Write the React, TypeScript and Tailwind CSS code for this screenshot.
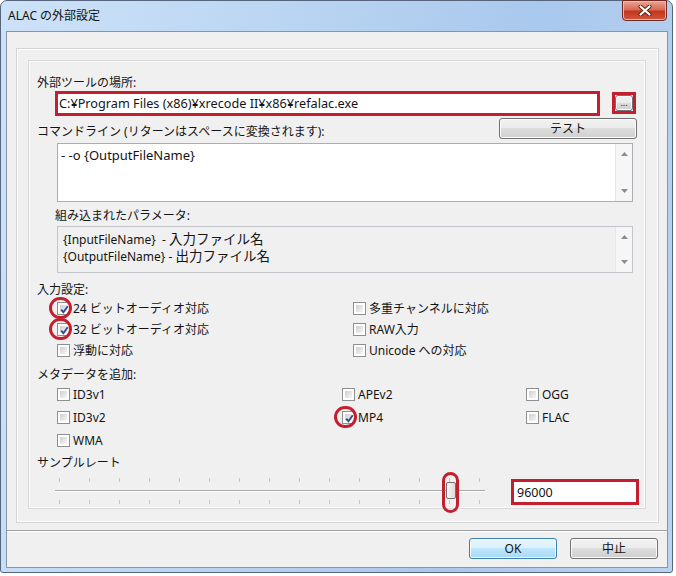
import React from "react"
import clsx from "clsx"

function Check({ checked }: { checked?: boolean }) {
  return (
    <span className="relative flex h-[13px] w-[13px] shrink-0 border border-[#8e8f8f] bg-white p-[2px]">
      <span className="block h-full w-full bg-gradient-to-br from-[#cfcfcf] to-[#f7f7f7]" />
      {checked && (
        <svg className="absolute left-[1px] top-[1px]" width="11" height="11" viewBox="0 0 11 11">
          <path d="M2.2 5.6 L4.4 8.2 L8.8 2.2" fill="none" stroke="#34498a" strokeWidth="1.9" />
        </svg>
      )}
    </span>
  )
}

function Opt({ label, checked, ring }: { label: string; checked?: boolean; ring?: boolean }) {
  return (
    <div className="flex items-center gap-[3px]">
      <span className="relative">
        <Check checked={checked} />
        {ring && (
          <span className="absolute left-[-8px] top-[-5px] h-[22px] w-[23px] rounded-full border-[3px] border-[#c41f2f]" />
        )}
      </span>
      <span>{label}</span>
    </div>
  )
}

function Btn({ children, className, primary }: { children: React.ReactNode; className?: string; primary?: boolean }) {
  return (
    <div
      className={clsx(
        "flex items-center justify-center rounded-[3px] border shadow-[inset_0_0_0_1px_#fbfbfb]",
        primary
          ? "border-[#3c7fb1] bg-[linear-gradient(#eaf6fd,#d9f0fc_50%,#bee6fd_50%,#a7d9f5)]"
          : "border-[#707070] bg-[linear-gradient(#f2f2f2,#ebebeb_50%,#dddddd_50%,#cfcfcf)]",
        className
      )}
    >
      {children}
    </div>
  )
}

function VScroll() {
  return (
    <div className="flex w-[17px] shrink-0 flex-col items-center justify-between border-l border-[#e6e6e6] bg-[#f6f6f6] py-[8px]">
      <svg width="7" height="4" viewBox="0 0 7 4">
        <path d="M0 4 L3.5 0 L7 4Z" fill="#8c8c8c" />
      </svg>
      <svg width="7" height="4" viewBox="0 0 7 4">
        <path d="M0 0 L3.5 4 L7 0Z" fill="#8c8c8c" />
      </svg>
    </div>
  )
}

const ticks = Array.from({ length: 15 }, (_, i) => 4 + i * 30)

export default function App() {
  return (
    <div className="h-[576px] w-[676px] overflow-hidden bg-white font-['Noto_Sans','Noto_Sans_CJK_JP',sans-serif] text-[12px] leading-[17px] text-[#141414]">
      <div className="flex h-[573px] w-[673px] flex-col rounded-t-[7px] rounded-b-[3px] border border-[#56657b] bg-[linear-gradient(100deg,#cde2f8,#b9d4f2_40%,#a9c8ed_70%,#b9d3f0)]">
        {/* title bar */}
        <div className="flex h-[30px] items-start justify-between">
          <span className="mt-[6px] pl-[7px] text-[#111]">ALAC の外部設定</span>
          <div className="mr-[5px] mt-[-1px] flex h-[21px] w-[45px] items-center justify-center rounded-b-[4px] border border-[#6e2a22] bg-[linear-gradient(#e9a797,#d66a55_45%,#c2371f_55%,#d2563b)] shadow-[inset_0_0_0_1px_#efb7a8]">
            <svg width="14" height="11" viewBox="0 0 14 11">
              <path d="M2.5 1.5 L11.5 9.5 M11.5 1.5 L2.5 9.5" stroke="#5a1d16" strokeWidth="4" strokeLinecap="round" />
              <path d="M2.5 1.5 L11.5 9.5 M11.5 1.5 L2.5 9.5" stroke="#ffffff" strokeWidth="2.2" strokeLinecap="round" />
            </svg>
          </div>
        </div>

        {/* client area */}
        <div className="ml-[5px] flex h-[537px] w-[662px] flex-col border border-[#8596ab] bg-[#f0f0f0]">
          <div className="ml-[9px] mt-[16px] h-[475px] w-[643px] border border-[#d5d5d5] shadow-[inset_0_0_0_1px_#ffffff]">
            <div className="ml-[11px] mt-[11px] flex h-[449px] w-[618px] flex-col border border-[#d9d9d9] shadow-[inset_0_0_0_1px_#fbfbfb]">
              <div className="mt-[13px] h-[17px] pl-[8px]">外部ツールの場所:</div>

              <div className="flex h-[25px] items-start">
                <div className="ml-[26px] flex h-[25px] w-[545px] items-center border-[3px] border-[#c41f2f] bg-white pl-[1px] text-[12.7px]">
                  C:¥Program Files (x86)¥xrecode II¥x86¥refalac.exe
                </div>
                <div className="ml-[12px] mt-[1px] flex h-[22px] w-[24px] items-center justify-center border-[3px] border-[#c41f2f]">
                  <Btn className="h-[16px] w-[18px] rounded-[2px] border-[#9a9a9a] text-[9px] leading-[10px]">...</Btn>
                </div>
              </div>

              <div className="flex h-[24px] items-start justify-between pr-[8px]">
                <span className="mt-[7px] pl-[8px]">コマンドライン (リターンはスペースに変換されます):</span>
                <Btn className="mt-[2px] h-[21px] w-[138px]">テスト</Btn>
              </div>

              <div className="ml-[28px] mt-[3px] flex h-[59px] w-[576px] border border-[#abadb3] bg-white">
                <div className="flex-1 pl-[3px] pt-[3px] text-[13px]">- -o {"{OutputFileName}"}</div>
                <VScroll />
              </div>

              <div className="mt-[5px] h-[17px] pl-[26px]">組み込まれたパラメータ:</div>

              <div className="ml-[28px] mt-[2px] flex h-[47px] w-[576px] border border-[#c4c6cc]">
                <div className="flex-1 pl-[5px] pt-[4px]">
                  <div className="flex h-[17px] items-center">
                    <span className="w-[99px] shrink-0">{"{InputFileName}"}</span>
                    <span className="whitespace-pre">- </span>
                    <span className="text-[13.5px] leading-[17px]">入力ファイル名</span>
                  </div>
                  <div className="flex h-[17px] items-center">
                    <span className="whitespace-pre">{"{OutputFileName} - "}</span>
                    <span className="text-[13.5px] leading-[17px]">出力ファイル名</span>
                  </div>
                </div>
                <VScroll />
              </div>

              <div className="mt-[8px] h-[17px] pl-[8px]">入力設定:</div>
              <div className="grid grid-cols-[296px_1fr] pl-[28px]">
                <div className="flex h-[21px] items-center">
                  <Opt label="24 ビットオーディオ対応" checked ring />
                </div>
                <div className="flex h-[21px] items-center">
                  <Opt label="多重チャンネルに対応" />
                </div>
                <div className="flex h-[21px] items-center">
                  <Opt label="32 ビットオーディオ対応" checked ring />
                </div>
                <div className="flex h-[21px] items-center">
                  <Opt label="RAW入力" />
                </div>
                <div className="flex h-[20px] items-center">
                  <Opt label="浮動に対応" />
                </div>
                <div className="flex h-[20px] items-center">
                  <Opt label="Unicode への対応" />
                </div>
              </div>

              <div className="mt-[7px] h-[16px] pl-[8px] leading-[16px]">メタデータを追加:</div>
              <div className="grid grid-cols-[285px_184px_1fr] pl-[28px]">
                <div className="flex h-[23px] items-center"><Opt label="ID3v1" /></div>
                <div className="flex h-[23px] items-center"><Opt label="APEv2" /></div>
                <div className="flex h-[23px] items-center"><Opt label="OGG" /></div>
                <div className="flex h-[23px] items-center"><Opt label="ID3v2" /></div>
                <div className="flex h-[23px] items-center"><Opt label="MP4" checked ring /></div>
                <div className="flex h-[23px] items-center"><Opt label="FLAC" /></div>
                <div className="flex h-[23px] items-center"><Opt label="WMA" /></div>
              </div>

              <div className="mt-[3px] h-[16px] pl-[8px] leading-[16px]">サンプルレート</div>
              <div className="flex h-[36px] items-start">
                <div className="relative ml-[26px] h-[36px] w-[430px]">
                  <svg width="430" height="36" viewBox="0 0 430 36">
                    <line x1="0" y1="19.5" x2="430" y2="19.5" stroke="#a8a8a8" />
                    <line x1="0" y1="20.5" x2="430" y2="20.5" stroke="#ffffff" />
                    {ticks.map((x) => (
                      <g key={x}>
                        <line x1={x + 0.5} y1="7" x2={x + 0.5} y2="11" stroke="#c6c6c6" />
                        <line x1={x + 0.5} y1="29" x2={x + 0.5} y2="33" stroke="#c6c6c6" />
                      </g>
                    ))}
                  </svg>
                  <span className="absolute left-[391px] top-[11px] h-[17px] w-[10px] rounded-[2px] border border-[#707070] bg-[linear-gradient(90deg,#f6f6f6,#dcdcdc)]" />
                  <span className="absolute left-[387px] top-[1px] h-[41px] w-[17px] rounded-full border-[3px] border-[#c41f2f]" />
                </div>
                <div className="ml-[26px] mt-[8px] flex h-[26px] w-[128px] items-center border-[3px] border-[#c41f2f] bg-white pl-[3px] text-[12.5px]">
                  96000
                </div>
              </div>
            </div>
          </div>

          <div className="mt-[7px] h-px w-full bg-[#a0a0a0]" />
          <div className="h-px w-full bg-white" />
          <div className="mt-[6px] flex justify-end gap-[13px] pr-[9px]">
            <Btn primary className="h-[21px] w-[88px]">OK</Btn>
            <Btn className="h-[21px] w-[88px]">中止</Btn>
          </div>
        </div>
      </div>
    </div>
  )
}
